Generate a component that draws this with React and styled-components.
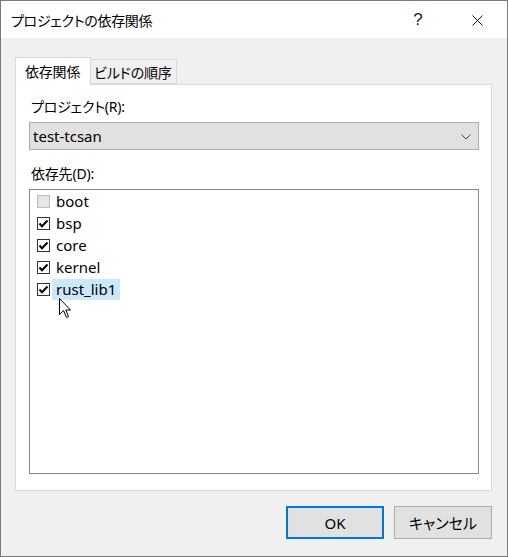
import React from "react";
import styled, { createGlobalStyle } from "styled-components";

const GlobalStyle = createGlobalStyle`
  html, body {
    margin: 0;
    padding: 0;
    background: #ffffff;
  }
  body {
    font-family: "Noto Sans", "Noto Sans CJK JP", sans-serif;
    font-feature-settings: "palt";
  }
`;

const deps = [
  { name: "boot", checked: false, disabled: true },
  { name: "bsp", checked: true },
  { name: "core", checked: true },
  { name: "kernel", checked: true },
  { name: "rust_lib1", checked: true, selected: true },
];

const App = () => {
  return (
    <>
      <GlobalStyle />
      <Window>
        <TitleBar>
          <Title>プロジェクトの依存関係</Title>
          <TitleButtons>
            <HelpBtn>?</HelpBtn>
            <CloseBtn>
              <svg width="11" height="11" viewBox="0 0 11 11">
                <path d="M0.5 0.5 L10.5 10.5 M10.5 0.5 L0.5 10.5" stroke="#1a1a1a" strokeWidth="1" fill="none" />
              </svg>
            </CloseBtn>
          </TitleButtons>
        </TitleBar>
        <Body>
          <Tabs>
            <Tab active>依存関係</Tab>
            <Tab>ビルドの順序</Tab>
          </Tabs>
          <Panel>
            <FieldLabel>プロジェクト(R):</FieldLabel>
            <Combo>
              <span>test-tcsan</span>
              <svg width="10" height="6" viewBox="0 0 10 6">
                <path d="M0.5 0.5 L5 5 L9.5 0.5" stroke="#444" strokeWidth="1" fill="none" />
              </svg>
            </Combo>
            <FieldLabel second>依存先(D):</FieldLabel>
            <ListBox>
              {deps.map((d) => (
                <Item key={d.name}>
                  <Check checked={d.checked} disabled={d.disabled}>
                    {d.checked && (
                      <svg width="11" height="11" viewBox="0 0 11 11">
                        <path d="M1.5 5.5 L4 8.3 L9.5 2.5" stroke="#000" strokeWidth="2" fill="none" />
                      </svg>
                    )}
                  </Check>
                  <ItemText selected={d.selected}>{d.name}</ItemText>
                </Item>
              ))}
              <Cursor width="13" height="21" viewBox="0 0 13 21">
                <path
                  d="M0.5 0.5 L0.5 16.5 L4.5 12.5 L7.5 19.5 L9.5 18.5 L6.8 12 L11.5 12 Z"
                  fill="#fff"
                  stroke="#000"
                  strokeWidth="1"
                  strokeLinejoin="miter"
                />
              </Cursor>
            </ListBox>
          </Panel>
          <Footer>
            <Button primary>OK</Button>
            <Button>キャンセル</Button>
          </Footer>
        </Body>
      </Window>
    </>
  );
};

export default App;

const Window = styled.div`
  width: 508px;
  height: 557px;
  box-sizing: border-box;
  border: 1px solid #7a7a7a;
  display: flex;
  flex-direction: column;
  background: #f0f0f0;
  color: #000;
`;

const TitleBar = styled.div`
  height: 37px;
  flex-shrink: 0;
  background: #ffffff;
  display: flex;
  align-items: center;
  justify-content: space-between;
  padding-left: 10px;
`;

const Title = styled.div`
  font-size: 14px;
  line-height: 20px;
  letter-spacing: -0.3px;
  font-family: "Noto Sans CJK JP", sans-serif;
`;

const TitleButtons = styled.div`
  display: flex;
  align-items: center;
  height: 100%;
`;

const HelpBtn = styled.div`
  width: 58px;
  height: 100%;
  display: flex;
  align-items: center;
  justify-content: center;
  font-size: 17px;
  font-family: "Liberation Sans", sans-serif;
  color: #1a1a1a;
  padding-top: 1px;
  box-sizing: border-box;
`;

const CloseBtn = styled.div`
  width: 60px;
  height: 100%;
  display: flex;
  align-items: center;
  justify-content: center;
  padding-top: 2px;
  box-sizing: border-box;
`;

const Body = styled.div`
  flex: 1;
  display: flex;
  flex-direction: column;
  padding: 18px 15px 0 14px;
`;

const Tabs = styled.div`
  display: flex;
  align-items: flex-end;
  height: 28px;
  position: relative;
  z-index: 1;
`;

const Tab = styled.div`
  box-sizing: border-box;
  height: ${(p) => (p.active ? "28px" : "25px")};
  margin-bottom: ${(p) => (p.active ? "-1px" : "0")};
  padding: ${(p) => (p.active ? "0 10px 2px 9px" : "0 4px 0 3px")};
  background: ${(p) => (p.active ? "#ffffff" : "#f0f0f0")};
  border: 1px solid #d9d9d9;
  border-bottom: ${(p) => (p.active ? "none" : "1px solid #d9d9d9")};
  ${(p) => (!p.active ? "border-left: none;" : "")}
  display: flex;
  align-items: center;
  font-size: 14px;
  letter-spacing: -0.2px;
  font-family: "Noto Sans CJK JP", sans-serif;
  line-height: 20px;
`;

const Panel = styled.div`
  box-sizing: border-box;
  height: 407px;
  background: #ffffff;
  border: 1px solid #d9d9d9;
  padding: 12px 12px 0 14px;
  display: flex;
  flex-direction: column;
`;

const FieldLabel = styled.div`
  font-size: 14px;
  letter-spacing: -0.2px;
  line-height: 20px;
  height: 20px;
  margin-top: ${(p) => (p.second ? "14px" : "0")};
  margin-bottom: 5px;
  margin-left: 1px;
`;

const Combo = styled.div`
  box-sizing: border-box;
  height: 28px;
  margin-left: -1px;
  background: #e1e1e1;
  border: 1px solid #adadad;
  display: flex;
  align-items: center;
  justify-content: space-between;
  padding: 0 7px 0 3px;
  font-size: 15px;

  svg {
    margin-top: 1px;
  }
`;

const ListBox = styled.div`
  box-sizing: border-box;
  height: 285px;
  margin-left: -1px;
  border: 1px solid #828790;
  background: #ffffff;
  padding: 0 0 0 7px;
  position: relative;
`;

const Item = styled.div`
  height: 22px;
  display: flex;
  align-items: center;
`;

const Check = styled.div`
  box-sizing: border-box;
  width: 13px;
  height: 13px;
  border: 1px solid ${(p) => (p.disabled ? "#bcbcbc" : "#333333")};
  background: ${(p) => (p.disabled ? "#e6e6e6" : "#ffffff")};
  display: flex;
  align-items: center;
  justify-content: center;
`;

const ItemText = styled.span`
  margin-left: 2px;
  padding: 0 4px 0 4px;
  height: 21px;
  line-height: 21px;
  font-size: 15px;
  background: ${(p) => (p.selected ? "#cce8ff" : "transparent")};
`;

const Cursor = styled.svg`
  position: absolute;
  left: 29px;
  top: 108px;
`;

const Footer = styled.div`
  display: flex;
  justify-content: flex-end;
  gap: 10px;
  margin-top: 15px;
`;

const Button = styled.div`
  box-sizing: border-box;
  width: 98px;
  height: 33px;
  background: #e1e1e1;
  border: ${(p) => (p.primary ? "2px solid #0078d7" : "1px solid #adadad")};
  display: flex;
  align-items: center;
  justify-content: center;
  font-size: 15px;
  font-family: "Noto Sans", "Noto Sans CJK JP", sans-serif;
`;
